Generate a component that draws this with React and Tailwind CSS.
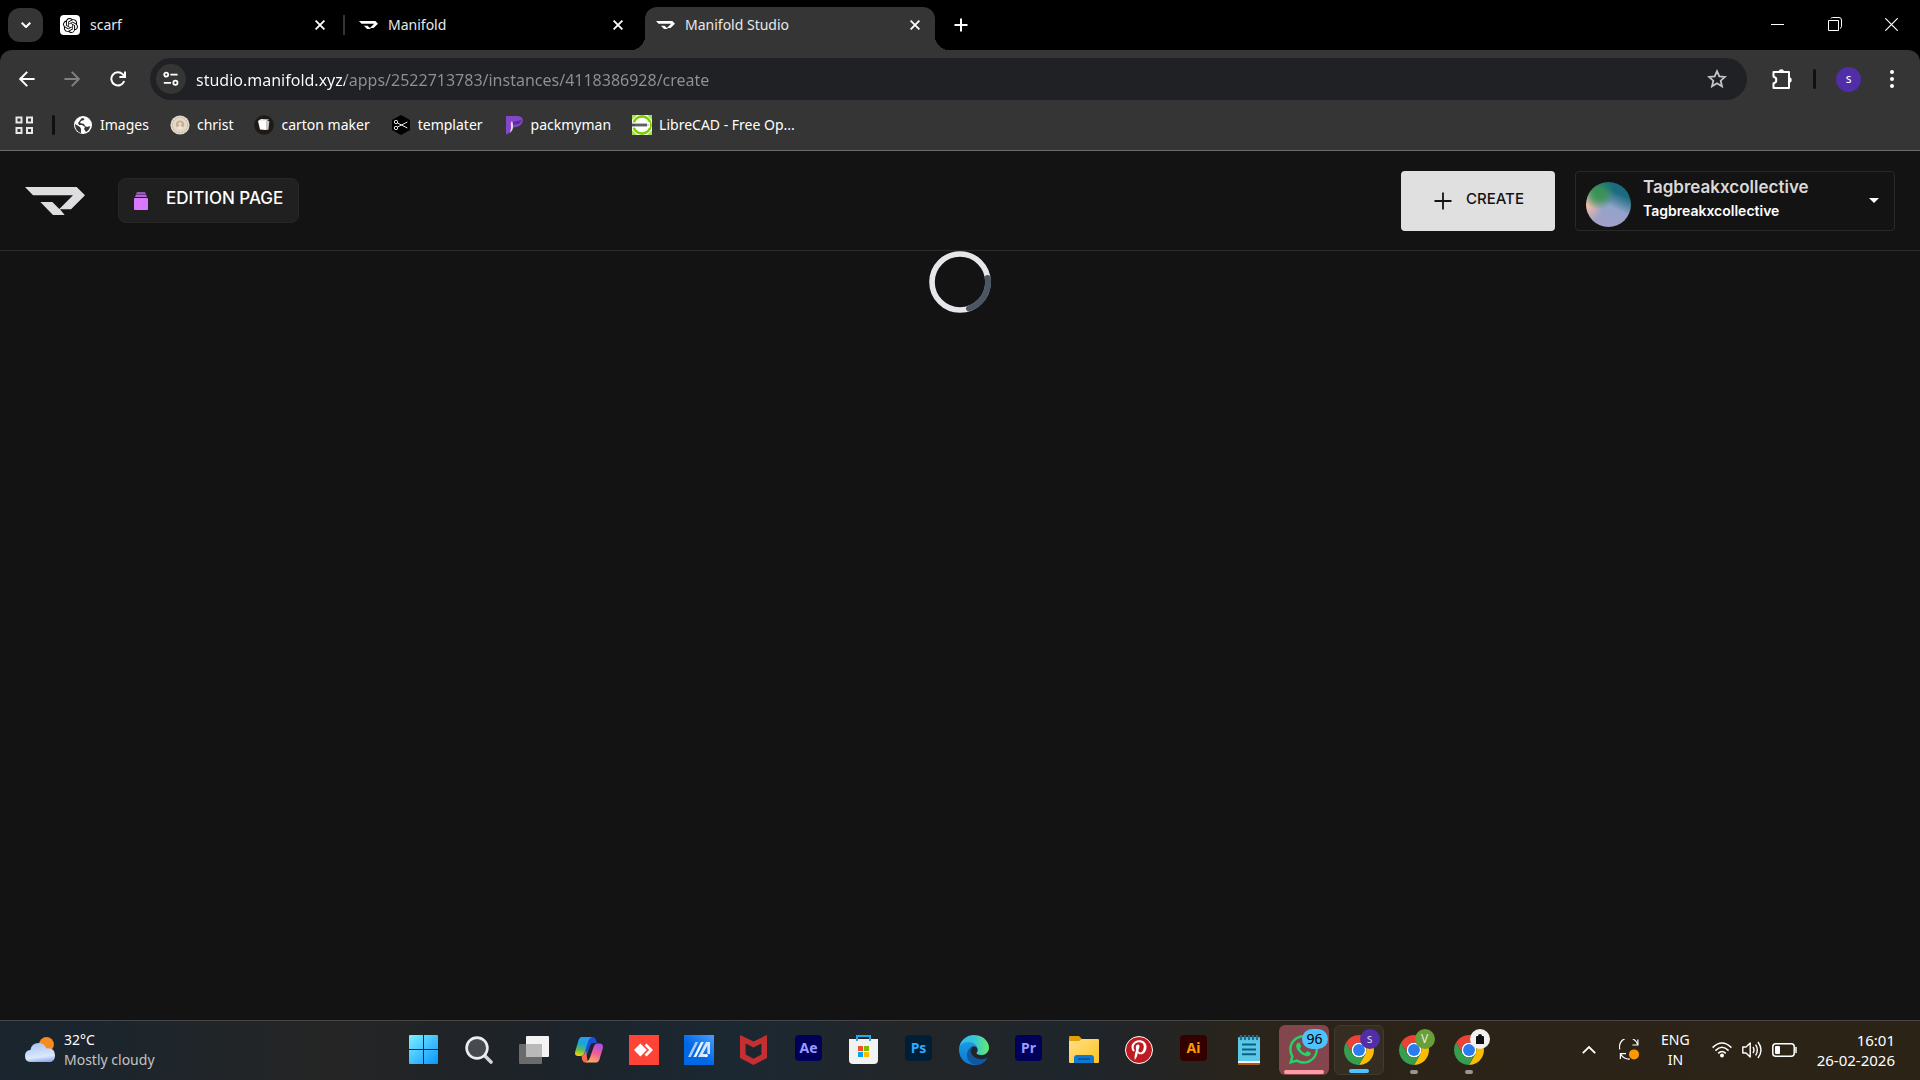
import { FaWhatsapp, FaPinterestP } from "react-icons/fa";
import { SiOpenai } from "react-icons/si";

function ManifoldLogo({ className }) {
  return (
    <svg viewBox="0 0 180 84" className={className} fill="currentColor">
      <path d="M0 0H155L180 25L138 67H105L119 84H84L46 45H82L103 66L144 25H24Z" />
    </svg>
  );
}

function CloseIcon() {
  return (
    <svg viewBox="0 0 10 10" className="size-2.5" fill="none" stroke="currentColor" strokeWidth="1.8">
      <path d="M0.6 0.6L9.4 9.4M9.4 0.6L0.6 9.4" />
    </svg>
  );
}

function Tab({ icon, title, active }) {
  return (
    <div
      className={
        active
          ? "relative mt-[7px] h-[43px] w-[290px] rounded-t-xl bg-[#353535] flex items-center pl-2.5 pr-2.5 pb-[7px]"
          : "mt-[7px] h-[43px] w-[290px] flex items-center pl-[11px] pr-[9px] pb-[7px]"
      }
    >
      {active && (
        <>
          <span className="absolute bottom-0 -left-3.5 size-3.5 bg-[radial-gradient(circle_at_0_0,transparent_14px,#353535_14px)]" />
          <span className="absolute bottom-0 -right-3.5 size-3.5 bg-[radial-gradient(circle_at_100%_0,transparent_14px,#353535_14px)]" />
        </>
      )}
      <span className="size-5 flex items-center justify-center">{icon}</span>
      <span className="ml-2.5 flex-1 truncate text-sm text-[#e8e8e8]">{title}</span>
      <button aria-label="Close tab" className="size-5 flex items-center justify-center">
        <CloseIcon />
      </button>
    </div>
  );
}

function TabStrip() {
  return (
    <div className="flex h-[50px] bg-black pl-2 text-white">
      <button aria-label="Search tabs" className="mt-2 mr-1.5 flex h-[34px] w-[35px] items-center justify-center rounded-xl bg-[#353535]">
        <svg viewBox="0 0 10 6" className="h-1.5 w-2.5" fill="none" stroke="currentColor" strokeWidth="2">
          <path d="M0.7 0.7L5 5L9.3 0.7" />
        </svg>
      </button>
      <Tab
        title="scarf"
        icon={
          <span className="flex size-5 items-center justify-center rounded bg-white text-black">
            <SiOpenai size={15} />
          </span>
        }
      />
      <span className="mt-[15px] ml-1 mr-0.5 h-5 w-0.5 bg-[#353535]" />
      <Tab title="Manifold" icon={<ManifoldLogo className="w-[19px]" />} />
      <span className="w-2" />
      <Tab active title="Manifold Studio" icon={<ManifoldLogo className="w-[19px]" />} />
      <button aria-label="New tab" className="ml-3 mt-2 flex h-[34px] w-7 items-center justify-center">
        <svg viewBox="0 0 14 14" className="size-3.5" stroke="currentColor" strokeWidth="2">
          <path d="M7 0.5V13.5M0.5 7H13.5" />
        </svg>
      </button>
      <div className="ml-auto flex h-12">
        <button aria-label="Minimize" className="flex w-[57px] items-center justify-center">
          <span className="h-px w-[13px] bg-white" />
        </button>
        <button aria-label="Restore" className="flex w-[57px] items-center justify-center">
          <svg viewBox="0 0 14 14" className="size-3.5" fill="none" stroke="currentColor">
            <path d="M0.5 3.5H10.5V13.5H0.5Z" />
            <path d="M3 1.5Q3.2 0.5 4.5 0.5H11Q13.5 0.5 13.5 3V9.5Q13.5 11 12 11.3" />
          </svg>
        </button>
        <button aria-label="Close" className="flex w-[57px] items-center justify-center">
          <svg viewBox="0 0 13 13" className="size-[13px]" stroke="currentColor" strokeWidth="1.2">
            <path d="M0.3 0.3L12.7 12.7M12.7 0.3L0.3 12.7" />
          </svg>
        </button>
      </div>
    </div>
  );
}

function Toolbar() {
  return (
    <div className="flex h-[42px] items-center text-white">
      <button aria-label="Back" className="ml-3 flex size-[30px] items-center justify-center">
        <svg viewBox="0 0 16 16" className="size-4" fill="none" stroke="currentColor" strokeWidth="2">
          <path d="M8.2 0.9L1.2 8L8.2 15.1M1.2 8H15.6" />
        </svg>
      </button>
      <button aria-label="Forward" className="ml-[15px] flex size-[30px] items-center justify-center text-[#808080]">
        <svg viewBox="0 0 16 16" className="size-4" fill="none" stroke="currentColor" strokeWidth="2">
          <path d="M7.8 0.9L14.8 8L7.8 15.1M14.8 8H0.4" />
        </svg>
      </button>
      <button aria-label="Reload" className="ml-4 flex size-[30px] items-center justify-center">
        <svg viewBox="0 0 16 16" className="size-4" fill="none" stroke="currentColor" strokeWidth="2">
          <path d="M14.2 10A6.6 6.6 0 1 1 12.8 3.4L14.6 5.4" />
          <path d="M15 0.4V6H9.4" />
        </svg>
      </button>
      <div className="ml-[17px] flex h-[42px] flex-1 items-center rounded-full bg-[#202124] pl-1.5">
        <button aria-label="Site information" className="flex size-[30px] items-center justify-center rounded-full bg-[#353535]">
          <svg viewBox="0 0 16 16" className="size-4" fill="none" stroke="currentColor" strokeWidth="1.8">
            <circle cx="3.2" cy="3.6" r="2" />
            <path d="M7.4 3.6H14.6M0.8 11.8H8" />
            <circle cx="12.4" cy="11.8" r="2.1" />
          </svg>
        </button>
        <input
          aria-label="Address"
          readOnly
          value="studio.manifold.xyz/apps/2522713783/instances/4118386928/create"
          className="ml-2.5 flex-1 bg-[linear-gradient(to_right,#ffffff_149px,#8f9195_149px)] bg-clip-text pt-0.5 text-base text-[#8f9195] outline-none [-webkit-text-fill-color:transparent]"
        />
        <button aria-label="Bookmark this tab" className="mr-[15px] flex size-[30px] items-center justify-center text-[#c4c4c4]">
          <svg viewBox="0 0 20 20" className="size-5" fill="none" stroke="currentColor" strokeWidth="1.8">
            <path d="M10 2.2L12.3 7.4L18 7.9L13.7 11.7L15 17.3L10 14.3L5 17.3L6.3 11.7L2 7.9L7.7 7.4Z" />
          </svg>
        </button>
      </div>
      <button aria-label="Extensions" className="ml-5 flex size-[30px] items-center justify-center">
        <svg viewBox="0 0 22 22" className="size-[22px]" fill="none" stroke="currentColor" strokeWidth="2">
          <path d="M2.5 4H18V20H2.5V15.3C4.6 15 5.3 13.6 5.3 12S4.6 9 2.5 8.7Z" strokeLinejoin="round" />
          <path d="M7.6 4A2.7 2.7 0 0 1 13 4ZM18 9.3A2.7 2.7 0 0 1 18 14.7Z" fill="currentColor" stroke="none" />
        </svg>
      </button>
      <span className="ml-4 h-5 w-[3px] rounded bg-[#101010]" />
      <button aria-label="Profile" className="ml-5 flex size-[25px] items-center justify-center rounded-full bg-[#512da8] text-xs">
        s
      </button>
      <button aria-label="Menu" className="ml-4 mr-[13px] flex h-[30px] w-[30px] items-center justify-center">
        <svg viewBox="0 0 4 18" className="h-[18px] w-1" fill="currentColor">
          <circle cx="2" cy="2" r="2" />
          <circle cx="2" cy="9" r="2" />
          <circle cx="2" cy="16" r="2" />
        </svg>
      </button>
    </div>
  );
}

const bookmarks = [
  {
    name: "Images",
    icon: (
      <svg viewBox="0 0 20 20" className="size-5">
        <circle cx="10" cy="10" r="9" fill="#fff" />
        <path d="M2 9L7 12L8 14L8 18C4 17 2 13 2 9ZM9 3C11 3 12 4 11 5L8 6L7 8L11 9L12 11L14 12L17 11C17 14 15 16 13 17L11 14L12 12L9 10L6 10L5 8L8 4Z" fill="#353535" />
      </svg>
    ),
  },
  {
    name: "christ",
    icon: (
      <svg viewBox="0 0 20 20" className="size-5" fill="none">
        <circle cx="10" cy="10" r="9.6" fill="#e5d9c8" />
        <circle cx="10" cy="10" r="7.6" stroke="#c7b49b" strokeDasharray="2 1" />
        <circle cx="10" cy="9.6" r="4.2" fill="#c4ae91" />
        <circle cx="10" cy="9" r="1.8" fill="#eadfce" />
        <path d="M7 12Q10 10 13 12L12 14H8Z" fill="#efe5d8" />
      </svg>
    ),
  },
  {
    name: "carton maker",
    icon: (
      <svg viewBox="0 0 20 20" className="size-5">
        <circle cx="10" cy="10" r="9.8" fill="#1d1a17" />
        <path d="M4 6L12 5V15L6 14.4Z" fill="#fff" />
        <path d="M12 5L15.4 6.2L14.4 14.8L12 15Z" fill="#c8c8c8" />
        <path d="M4 6L7 4L15.4 4.6L12 6Z" fill="#eee" />
      </svg>
    ),
  },
  {
    name: "templater",
    icon: (
      <svg viewBox="0 0 20 20" className="size-5" fill="none">
        <path d="M10 0L19 5V15L10 20L1 15V5Z" fill="#000" />
        <g stroke="#e6e6e6">
          <circle cx="5" cy="7" r="1.7" />
          <circle cx="5" cy="13" r="1.7" />
          <path d="M6.5 8L16.4 13M6.5 12L16.4 7" />
        </g>
      </svg>
    ),
  },
  {
    name: "packmyman",
    icon: (
      <svg viewBox="0 0 20 20" className="size-5">
        <path d="M2 1H13Q18 1 19 5Q18 11 12 12L8 13Q8 18 2 19.5Z" fill="#8446c8" />
        <path d="M8 7L18 5Q16 9 12 9.6L9 10Z" fill="#5c2a9a" />
        <path d="M8 6Q10 10 8.4 15L6 18Q7.6 12 6.8 8Z" fill="#e5d4f4" />
      </svg>
    ),
  },
  {
    name: "LibreCAD - Free Op...",
    icon: (
      <svg viewBox="0 0 20 20" className="size-5">
        <path d="M0 0H20V20H0Z" fill="#fff" />
        <path d="M0 0H5L0 5ZM20 0H15L20 5ZM0 20H5L0 15ZM20 20H15L20 15Z" fill="#a5de4a" />
        <circle cx="10" cy="10" r="8.6" fill="#fff" stroke="#7fce00" strokeWidth="2.6" />
        <path d="M0 7.4H18V12.6H0Z" fill="#fff" />
        <path d="M0 8.6H15V11.4H0Z" fill="#4a4f55" />
        <path d="M3 10H17" stroke="#888" strokeWidth="0.6" />
      </svg>
    ),
  },
];

function BookmarksBar() {
  return (
    <div className="flex h-[50px] items-center pl-[15px] text-sm text-white">
      <button aria-label="Apps">
        <svg viewBox="0 0 19 19" className="size-[19px]" fill="none" stroke="#e8e8e8" strokeWidth="2">
          <path d="M1.5 1.5H6.5V6.5H1.5ZM12 1.5H17V6.5H12ZM1.5 12H6.5V17H1.5ZM12 12H17V17H12Z" />
        </svg>
      </button>
      <span className="ml-[18px] h-5 w-[3px] rounded bg-[#101010]" />
      <nav className="ml-[18px] flex items-center gap-[21px]">
        {bookmarks.map((b) => (
          <a key={b.name} href="#" className="flex items-center gap-[7px]">
            {b.icon}
            {b.name}
          </a>
        ))}
      </nav>
    </div>
  );
}

function StudioHeader() {
  return (
    <header className="flex h-[100px] items-center border-b border-[#2c2c2c] px-[25px] font-['Inter',sans-serif]">
      <a href="#" aria-label="Manifold home" className="text-[#dedee0]">
        <ManifoldLogo className="w-[60px]" />
      </a>
      <button className="ml-[33px] flex h-[45px] w-[181px] items-center rounded-lg border border-[#272727] bg-[#202020] pl-[15px] text-[17px] font-medium text-white">
        <svg viewBox="0 0 14 18" className="mr-[18px] h-[18px] w-3.5">
          <path d="M3 0H11L12 2H2Z" fill="#9a54b5" />
          <path d="M2 2.6H12L13 5H1Z" fill="#b564d6" />
          <rect y="6" width="14" height="12" rx="1" fill="#d979ff" />
        </svg>
        <span className="pb-1">EDITION PAGE</span>
      </button>
      <button className="ml-auto flex h-[60px] w-[154px] items-center rounded bg-[#e0e0e0] pl-[33px] text-[15px] font-medium text-[#131313]">
        <svg viewBox="0 0 18 18" className="mr-3.5 size-[18px]" stroke="currentColor" strokeWidth="1.8">
          <path d="M9 0.5V17.5M0.5 9H17.5" />
        </svg>
        <span className="pb-0.5">CREATE</span>
      </button>
      <button className="ml-5 flex h-[60px] w-80 items-center rounded border border-[#292929] pl-2.5 pr-[15px] text-left">
        <span className="mt-2 size-[45px] rounded-full bg-[radial-gradient(circle_at_28%_26%,#38934f_0%,#38934fcc_14%,transparent_34%),radial-gradient(circle_at_0%_52%,#fbc1a0_0%,transparent_34%),linear-gradient(25deg,#a59fc8_10%,#93a3c9_48%,#1b6b80_74%)]" />
        <span className="ml-3 mb-1 flex flex-1 flex-col text-white">
          <span className="text-[17px] leading-6 font-semibold text-[#d9d9d9]">Tagbreakxcollective</span>
          <span className="text-sm leading-6 font-semibold">Tagbreakxcollective</span>
        </span>
        <svg viewBox="0 0 10 5" className="h-[5px] w-2.5" fill="#fff">
          <path d="M0 0H10L5 5Z" />
        </svg>
      </button>
    </header>
  );
}

function Spinner() {
  return (
    <svg viewBox="0 0 62 62" className="mx-auto size-[62px]" fill="none">
      <circle cx="31" cy="31" r="28" stroke="#e5e7eb" strokeWidth="5.6" />
      <path d="M58.7 27A28 28 0 0 1 40 57.5" stroke="#4b5563" strokeWidth="6" strokeLinecap="round" />
    </svg>
  );
}

function AdobeIcon({ label, className }) {
  return (
    <span className={`mb-[3px] flex h-[26px] w-[27px] items-center justify-center rounded text-sm leading-none font-bold ${className}`}>
      {label}
    </span>
  );
}

function ChromeIcon() {
  return (
    <svg viewBox="0 0 48 48" className="size-[30px]">
      <circle cx="24" cy="24" r="12" fill="#fff" />
      <path d="M24 12H44.78A24 24 0 0 0 3.22 12L13.61 30A12 12 0 0 1 24 12Z" fill="#ea4335" />
      <path d="M34.39 30L24 48A24 24 0 0 0 44.78 12H24A12 12 0 0 1 34.39 30Z" fill="#fbbc04" />
      <path d="M13.61 30L3.22 12A24 24 0 0 0 24 48L34.39 30A12 12 0 0 1 13.61 30Z" fill="#34a04f" />
      <circle cx="24" cy="24" r="9.5" fill="#2a7af0" />
    </svg>
  );
}

const taskbarApps = [
  {
    name: "Start",
    icon: (
      <svg viewBox="0 0 29 29" className="size-[29px]">
        <linearGradient id="win" x1="0" y1="0" x2="1" y2="1">
          <stop offset="0" stopColor="#7df0ff" />
          <stop offset="1" stopColor="#0a94ff" />
        </linearGradient>
        <path d="M0 1Q0 0 1 0H14V14H0ZM15 0H28Q29 0 29 1V14H15ZM0 15H14V29H1Q0 29 0 28ZM15 15H29V28Q29 29 28 29H15Z" fill="url(#win)" />
      </svg>
    ),
  },
  {
    name: "Search",
    icon: (
      <svg viewBox="0 0 28 28" className="size-7" fill="none">
        <path d="M19 19L26 26" stroke="#d3d6da" strokeWidth="3.6" strokeLinecap="round" />
        <circle cx="12" cy="12" r="10.4" fill="#474b4f" stroke="#eceef0" strokeWidth="2.6" />
      </svg>
    ),
  },
  {
    name: "Task view",
    icon: (
      <svg viewBox="0 0 30 28" className="h-7 w-[30px]">
        <rect x="7" width="23" height="21" rx="1" fill="#f3f3f3" />
        <rect y="8" width="23" height="20" rx="1" fill="#6b6b6b" />
        <path d="M7 8H23V21H7Z" fill="#b9b9b9" />
      </svg>
    ),
  },
  {
    name: "Copilot",
    icon: (
      <svg viewBox="0 0 28 26" className="h-[26px] w-7">
        <linearGradient id="cop1" x1="0.4" y1="0" x2="0.2" y2="1">
          <stop offset="0" stopColor="#2a9cf0" />
          <stop offset="0.35" stopColor="#18a6d8" />
          <stop offset="0.65" stopColor="#5cb85a" />
          <stop offset="1" stopColor="#ffd400" />
        </linearGradient>
        <linearGradient id="cop2" x1="0.7" y1="0" x2="0.4" y2="1">
          <stop offset="0" stopColor="#a94fe8" />
          <stop offset="0.5" stopColor="#ee5c98" />
          <stop offset="1" stopColor="#ffac60" />
        </linearGradient>
        <path d="M15 0H18Q20 0 21 3L22 6H18Q16 6 15 9L12 18Q10 20 7 20L12 6Z" fill="#1b4fd6" />
        <path d="M7 0H17Q14 1 13 5L9 17Q8 19 6 19H3Q-1 19 0.4 14L3 5Q4 0 7 0Z" fill="url(#cop1)" />
        <path d="M13 25.6H10Q7 25 6.6 19Q9 19 10 16L11 13Q12 22 13 25.6Z" fill="#f56a4a" />
        <path d="M21 25.6H11Q14 24 15 20.6L19 9Q20 6.4 22 6.4H25Q29 7 27.6 12L25 20.6Q24 25.6 21 25.6Z" fill="url(#cop2)" />
      </svg>
    ),
  },
  {
    name: "AnyDesk",
    icon: (
      <svg viewBox="0 0 30 30" className="size-[30px]">
        <path d="M0 0H30V30H0Z" fill="#ff4336" />
        <path d="M5 15L11.4 8.6L17.8 15L11.4 21.4Z" fill="#fff" />
        <path d="M15.6 10.4L17.5 8.6L24 15L17.5 21.4L15.6 19.6L20.2 15Z" fill="#fff" />
      </svg>
    ),
  },
  {
    name: "MyASUS",
    icon: (
      <svg viewBox="0 0 30 30" className="size-[30px]">
        <linearGradient id="asus" x1="1" y1="0" x2="0.5" y2="0.6">
          <stop offset="0" stopColor="#4d9dff" />
          <stop offset="1" stopColor="#0068e6" />
        </linearGradient>
        <path d="M0 0H30V30H0Z" fill="url(#asus)" />
        <path d="M4 22L11.4 7H14.2L6.8 22Z" fill="#a9ccff" />
        <path d="M9.4 22L17 7H19.8L12.2 22Z" fill="#f2f7ff" />
        <path d="M14 22L22 7H26V19H23.4V10.6L18.8 19H21V22Z" fill="#d5e6ff" />
        <circle cx="22.2" cy="20.6" r="1.7" fill="#fff" />
      </svg>
    ),
  },
  {
    name: "McAfee",
    icon: (
      <svg viewBox="0 0 27 30" className="h-[30px] w-[27px]">
        <path d="M0 0L13.5 6.4L27 0V23L13.5 30L0 23Z" fill="#c62f31" />
        <path d="M5.6 8.4L13.5 12.4L21.4 8.4V19.6L13.5 23.8L5.6 19.6Z" fill="#1d262e" />
      </svg>
    ),
  },
  { name: "After Effects", icon: <AdobeIcon label="Ae" className="bg-[#00005b] text-[#9c99ff]" /> },
  {
    name: "Microsoft Store",
    icon: (
      <svg viewBox="0 0 29 29" className="size-[29px]">
        <path d="M8 6V1H21V6" fill="none" stroke="#25a9e8" strokeWidth="2" />
        <path d="M0 4H29V25Q29 29 25 29H4Q0 29 0 25Z" fill="#f2f2f2" />
        <path d="M9 11H14V16H9Z" fill="#f25022" />
        <path d="M15 11H20V16H15Z" fill="#7fba00" />
        <path d="M9 17H14V22H9Z" fill="#00a4ef" />
        <path d="M15 17H20V22H15Z" fill="#ffb900" />
        <path d="M8 3V6M21 3V6" stroke="#25a9e8" strokeWidth="2" />
      </svg>
    ),
  },
  { name: "Photoshop", icon: <AdobeIcon label="Ps" className="bg-[#001e36] text-[#31a8ff]" /> },
  {
    name: "Edge",
    icon: (
      <svg viewBox="0 0 256 256" className="size-[30px]">
        <linearGradient id="edge1" x1="0" y1="0.5" x2="1" y2="0.5">
          <stop offset="0" stopColor="#35b8f1" />
          <stop offset="0.5" stopColor="#34c6d8" />
          <stop offset="1" stopColor="#66eb6e" />
        </linearGradient>
        <linearGradient id="edge2" x1="0.5" y1="0" x2="0.5" y2="1">
          <stop offset="0" stopColor="#1b9de2" />
          <stop offset="1" stopColor="#0a78d4" />
        </linearGradient>
        <path d="M235.7 195.5a93.7 93.7 0 01-10.6 4.7 101.9 101.9 0 01-35.9 6.4c-47.3 0-88.5-32.5-88.5-74.3a31.5 31.5 0 0116.4-27.3c-42.8 1.8-53.8 46.4-53.8 72.5 0 74 68.1 81.4 82.8 81.4 7.9 0 19.8-2.3 27-4.6l1.3-.4a128.3 128.3 0 0066.6-52.8 4 4 0 00-5.3-5.6z" fill="#0f57a0" />
        <path d="M105.7 241.4A79.2 79.2 0 0183 220.1a80.7 80.7 0 0129.5-120c3.2-1.5 8.5-4.1 15.6-4a32.4 32.4 0 0125.7 13 31.9 31.9 0 016.3 18.7c0-.2 24.5-79.6-80-79.6-43.9 0-80 41.6-80 78.2a130.2 130.2 0 0012.1 56 128 128 0 00156.4 67 75.5 75.5 0 01-62.8-8z" fill="url(#edge2)" />
        <path d="M152.3 148.9c-.9 1-3.4 2.5-3.4 5.6 0 2.6 1.7 5.2 4.8 7.3 14.3 10 41.4 8.6 41.5 8.6a59.6 59.6 0 0030.3-8.3 61.4 61.4 0 0030.4-52.9c.3-22.4-8-37.3-11.3-43.9C223.5 23.9 177.7 0 128 0A128 128 0 000 126.2c.5-36.5 36.8-66 80-66 3.5 0 23.5.3 42 10 16.3 8.6 24.9 19 30.8 29.2 6.2 10.7 7.3 24.1 7.3 29.5s-2.7 13.3-7.8 20z" fill="url(#edge1)" />
      </svg>
    ),
  },
  { name: "Premiere Pro", icon: <AdobeIcon label="Pr" className="bg-[#00005b] text-[#9c99ff]" /> },
  {
    name: "File Explorer",
    icon: (
      <svg viewBox="0 0 30 27" className="h-[27px] w-[30px]">
        <linearGradient id="folder" x1="0" y1="0" x2="1" y2="1">
          <stop offset="0" stopColor="#ffe08a" />
          <stop offset="1" stopColor="#ffc420" />
        </linearGradient>
        <path d="M0 1Q0 0 1 0H10L13 3H20V8H0Z" fill="#e3a008" />
        <path d="M0 5H10L13 3H29Q30 3 30 4V26Q30 27 29 27H1Q0 27 0 26Z" fill="url(#folder)" />
        <path d="M5 22Q5 19 8 19H22Q25 19 25 22V27H5Z" fill="#0f78d0" />
        <path d="M9 23H21" stroke="#0a4f94" strokeWidth="1.4" />
      </svg>
    ),
  },
  {
    name: "Pinterest",
    icon: (
      <span className="flex size-7 items-center justify-center rounded-full border border-white bg-[#bd1a22] text-white">
        <FaPinterestP size={20} />
      </span>
    ),
  },
  { name: "Illustrator", icon: <AdobeIcon label="Ai" className="bg-[#330000] text-[#ff9a00]" /> },
  {
    name: "Notepad",
    icon: (
      <svg viewBox="0 0 22 30" className="h-[30px] w-[22px]">
        <path d="M0 26H22V29Q22 30 21 30H1Q0 30 0 29Z" fill="#b35a12" />
        <path d="M0 25H22V28H0Z" fill="#f3f3f3" />
        <path d="M0 3Q0 2 1 2H21Q22 2 22 3V26H0Z" fill="#5cc8e8" />
        <path d="M4 9.6H18M4 14.4H18M4 19.2H18" stroke="#0b5f80" strokeWidth="2" />
        <path d="M3 0V4M7 0V4M11 0V4M15 0V4M19 0V4" stroke="#1a6f8e" strokeWidth="2.4" strokeLinecap="round" />
      </svg>
    ),
  },
  {
    name: "WhatsApp",
    icon: <FaWhatsapp size={33} color="#25d366" />,
    tile: "bg-[#82464c]",
    bar: "w-10 bg-[#ff9ba6]",
    badge: <span className="absolute top-1 right-px flex h-5 w-[26px] items-center justify-center rounded-full bg-[#4cc2ff] text-sm text-black">96</span>,
  },
  {
    name: "Chrome, profile s",
    icon: <ChromeIcon />,
    tile: "border border-[#433a2e] bg-[#362d22]",
    bar: "w-5 bg-[#4cc2ff]",
    badge: <span className="absolute top-[3px] right-[3px] flex size-5 items-center justify-center rounded-full bg-[#512da8] text-xs text-[#d6cce9]">s</span>,
  },
  {
    name: "Chrome, profile V",
    icon: <ChromeIcon />,
    bar: "w-2 bg-[#9a958e]",
    badge: <span className="absolute top-1 right-1 flex size-5 items-center justify-center rounded-full bg-[#689f38] text-xs text-[#e4eedb]">V</span>,
  },
  {
    name: "Chrome, work profile",
    icon: <ChromeIcon />,
    bar: "w-2 bg-[#9a958e]",
    badge: (
      <span className="absolute top-1 right-1 flex size-5 items-center justify-center rounded-full bg-[#f1f1f1]">
        <svg viewBox="0 0 8 10" className="h-2.5 w-2">
          <path d="M0 3Q0 2 1 2H2Q2 0 4 0T6 2H7Q8 2 8 3V10H0Z" fill="#111" />
        </svg>
      </span>
    ),
  },
];

function TaskbarApp({ app }) {
  return (
    <button aria-label={app.name} className="flex w-[55px] justify-center">
      <span className={`relative flex size-[50px] items-center justify-center rounded-md ${app.tile || ""}`}>
        {app.icon}
        {app.badge}
        {app.bar && (
          <span className="absolute inset-x-0 bottom-px flex justify-center">
            <span className={`h-1 rounded-full ${app.bar}`} />
          </span>
        )}
      </span>
    </button>
  );
}

function Weather() {
  return (
    <div className="flex flex-1 items-center pl-[25px]">
      <svg viewBox="0 0 30 25" className="h-[25px] w-[30px]">
        <linearGradient id="cloud" x1="0.3" y1="0" x2="0.5" y2="1">
          <stop offset="0" stopColor="#a9c4f5" />
          <stop offset="0.75" stopColor="#dce8fc" />
          <stop offset="1" stopColor="#8fb0ee" />
        </linearGradient>
        <circle cx="21.5" cy="7.5" r="7.4" fill="#f68b1e" />
        <path d="M6 25Q0 25 0 19Q0 13.6 5.4 13Q6.6 6 13.6 6Q19 6 21.4 11.4Q30 10.6 30 18.4Q30 25 24 25Z" fill="url(#cloud)" />
      </svg>
      <div className="ml-[9px] text-sm leading-5">
        <p className="text-white">32°C</p>
        <p className="text-[#c3c3c3]">Mostly cloudy</p>
      </div>
    </div>
  );
}

function Tray() {
  return (
    <div className="flex flex-1 items-center justify-end pr-[25px] text-sm leading-5 text-white">
      <button aria-label="Show hidden icons">
        <svg viewBox="0 0 14 8" className="h-2 w-3.5" fill="none" stroke="currentColor" strokeWidth="1.8">
          <path d="M0.8 7.2L7 1L13.2 7.2" />
        </svg>
      </button>
      <svg viewBox="0 0 20 21" className="ml-[23px] h-[21px] w-5" fill="none" stroke="currentColor" strokeWidth="1.2">
        <path d="M0.8 10.4A9 9 0 0 1 18.6 5.6M18.9 0.6V6H13.4M11 20Q5 20.6 1.6 15M1.4 20V14.6H7" />
        <circle cx="15" cy="15.4" r="5" fill="#ff9800" stroke="none" />
      </svg>
      <div className="ml-[22px] text-center">
        <p>ENG</p>
        <p>IN</p>
      </div>
      <svg viewBox="0 0 20 16" className="ml-[22px] h-4 w-5" fill="none" stroke="currentColor" strokeWidth="1.5">
        <path d="M0.6 5.6Q10 -3.6 19.4 5.6M3.4 8.6Q10 2 16.6 8.6M6.2 11.4Q10 7.6 13.8 11.4" />
        <circle cx="10" cy="13.6" r="2" fill="currentColor" stroke="none" />
      </svg>
      <svg viewBox="0 0 20 18" className="ml-2.5 h-[18px] w-5" fill="none" stroke="currentColor" strokeWidth="1.4">
        <path d="M0.8 6H4L8.2 2V16L4 12H0.8Z" strokeLinejoin="round" />
        <path d="M11 6Q13 9 11 12M13.6 3.6Q17 9 13.6 14.4M16 1Q22 9 16 17" />
      </svg>
      <svg viewBox="0 0 25 14" className="ml-2.5 h-3.5 w-[25px]" fill="none" stroke="currentColor" strokeWidth="1.5">
        <rect x="0.8" y="0.8" width="21.4" height="12.4" rx="3" />
        <rect x="3" y="3" width="5" height="8" rx="1" fill="currentColor" stroke="none" />
        <path d="M24 4.5V9.5" strokeLinecap="round" />
      </svg>
      <div className="ml-5 text-right text-[15px] leading-5">
        <p>16:01</p>
        <p>26-02-2026</p>
      </div>
    </div>
  );
}

function Taskbar() {
  return (
    <footer className="flex h-[60px] items-center border-t border-[#464646] bg-[linear-gradient(to_right,#1b252f_0%,#1c252d_5%,#252525_17%,#1d2329_28%,#1b2832_38%,#232628_48%,#1e252c_56%,#2a241b_65%,#2c2318_75%,#2b2416_100%)] pb-0.5">
      <Weather />
      <div className="flex pr-7">
        {taskbarApps.map((app) => (
          <TaskbarApp key={app.name} app={app} />
        ))}
      </div>
      <Tray />
    </footer>
  );
}

export default function App() {
  return (
    <div className="flex min-h-screen flex-col bg-[#131313] font-['Noto_Sans','Open_Sans',sans-serif]">
      <div className="bg-black">
        <TabStrip />
        <div className="rounded-t-xl border-b border-[#6b6b6b] bg-[#353535] pt-2">
          <Toolbar />
          <BookmarksBar />
        </div>
      </div>
      <StudioHeader />
      <main className="flex-1">
        <Spinner />
      </main>
      <Taskbar />
    </div>
  );
}
